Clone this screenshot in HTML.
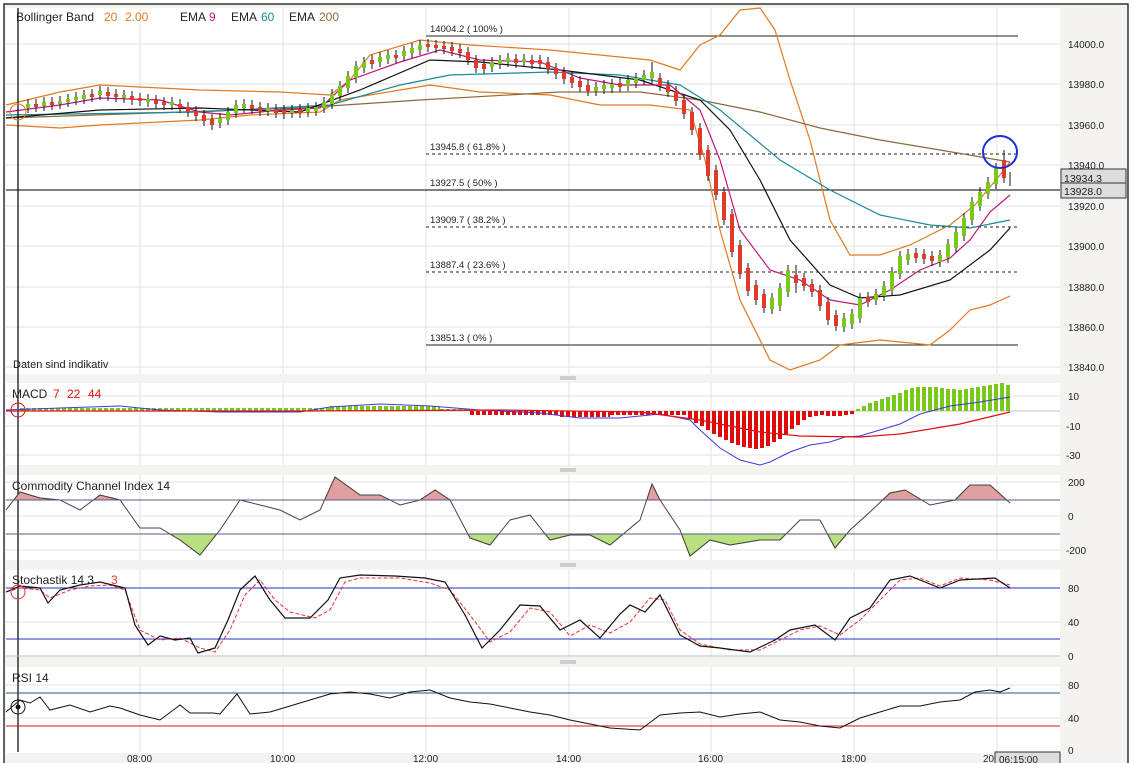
<!DOCTYPE html>
<html><head><meta charset="utf-8"><style>
html,body{margin:0;padding:0;background:#fff;width:1134px;height:763px;overflow:hidden}
svg{display:block;font-family:"Liberation Sans",sans-serif}
</style></head><body>
<svg width="1134" height="763" xmlns="http://www.w3.org/2000/svg">
<defs>
<clipPath id="ca"><rect x="0" y="470" width="1060" height="30"/></clipPath>
<clipPath id="cb"><rect x="0" y="534" width="1060" height="30"/></clipPath>
</defs>
<rect x="0" y="0" width="1134" height="763" fill="#fff"/>
<rect x="4" y="4" width="1124" height="770" fill="#f4f3ef" stroke="#333" stroke-width="1.5"/>
<rect x="6" y="8" width="1054" height="366" fill="#fff"/>
<rect x="6" y="383" width="1054" height="82" fill="#fff"/>
<rect x="6" y="475" width="1054" height="85" fill="#fff"/>
<rect x="6" y="570" width="1054" height="87" fill="#fff"/>
<rect x="6" y="667" width="1054" height="86" fill="#fff"/>
<g stroke="#aaa" stroke-width="1">
<path d="M560 377h16M560 379h16M560 469h16M560 471h16M560 564h16M560 566h16M560 661h16M560 663h16"/>
</g>
<g stroke="#e2e2e2" stroke-width="1">
<path d="M140 8V374M283 8V374M426 8V374M569 8V374M711 8V374M854 8V374M997 8V374"/>
<path d="M140 383V465M283 383V465M426 383V465M569 383V465M711 383V465M854 383V465M997 383V465"/>
<path d="M140 475V560M283 475V560M426 475V560M569 475V560M711 475V560M854 475V560M997 475V560"/>
<path d="M140 570V657M283 570V657M426 570V657M569 570V657M711 570V657M854 570V657M997 570V657"/>
<path d="M140 667V752M283 667V752M426 667V752M569 667V752M711 667V752M854 667V752M997 667V752"/>
<path d="M6 44H1060M6 84H1060M6 125H1060M6 165H1060M6 206H1060M6 246H1060M6 287H1060M6 327H1060M6 367H1060"/>
<path d="M6 396H1060M6 426H1060M6 455H1060"/>
<path d="M6 482H1060M6 516H1060M6 550H1060"/>
<path d="M6 622H1060"/>
<path d="M6 685H1060M6 718H1060"/>
</g>
<g stroke="#222" stroke-width="1" fill="none">
<path d="M426 36H1018M426 345H1018"/>
<path d="M426 154H1018M426 227H1018M426 272H1018" stroke-dasharray="3,3"/>
<path d="M6 190H1060" stroke="#000"/>
</g>
<g font-size="9.5" fill="#222">
<text x="430" y="32">14004.2 ( 100% )</text>
<text x="430" y="150">13945.8 ( 61.8% )</text>
<text x="430" y="186">13927.5 ( 50% )</text>
<text x="430" y="223">13909.7 ( 38.2% )</text>
<text x="430" y="268">13887.4 ( 23.6% )</text>
<text x="430" y="341">13851.3 ( 0% )</text>
</g>
<g fill="none" stroke-width="1.2">
<polyline stroke="#e07a20" points="6,105 60,92 100,85 160,88 200,90 280,92 330,95 350,80 370,55 420,40 470,45 550,50 600,55 650,60 680,70 700,45 720,35 740,10 760,8 775,30 790,80 810,140 830,220 850,255 880,255 910,245 950,225 975,205 1000,175 1010,162"/>
<polyline stroke="#e07a20" points="6,125 60,128 100,125 200,120 250,115 320,112 340,100 400,90 430,85 480,92 550,95 600,105 650,105 690,110 705,160 720,230 740,300 770,360 790,370 820,360 840,345 880,340 930,345 950,330 970,310 990,305 1010,296"/>
<polyline stroke="#8a6a3a" points="6,118 300,108 420,100 560,92 640,92 700,100 760,112 820,128 880,140 940,150 1010,162"/>
<polyline stroke="#1a8a99" points="6,115 200,112 330,105 400,85 450,75 550,72 620,75 680,85 720,110 780,160 830,190 880,215 930,225 970,228 1010,220"/>
<polyline stroke="#111" points="6,118 100,110 200,108 300,112 360,90 430,60 480,62 560,70 640,80 700,100 730,130 760,180 790,240 830,285 860,298 900,295 950,280 990,250 1010,228"/>
<polyline stroke="#c0187a" points="6,112 60,105 100,98 160,100 200,112 230,115 280,110 320,108 350,80 400,62 440,50 480,60 540,62 580,78 620,85 670,85 700,110 720,160 740,230 770,270 800,280 830,300 860,305 890,290 920,270 950,258 970,240 990,212 1010,195"/>
</g>
<!-- candles wicks -->
<path stroke="#111" stroke-width="1" fill="none" d="M28 99V113M36 99V112M44 97V111M52 97V110M60 96V109M68 94V107M76 92V105M84 90V104M92 89V102M100 86V100M108 87V101M116 89V102M124 90V103M132 91V105M140 93V106M148 94V107M156 95V109M164 97V110M172 97V110M180 99V113M188 102V117M196 106V121M204 110V126M212 114V130M220 113V128M228 107V125M236 100V118M244 99V113M252 100V114M260 102V116M268 103V116M276 104V118M284 105V119M292 105V118M300 104V118M308 103V117M316 102V116M324 97V113M332 89V109M340 81V101M348 71V93M356 61V83M364 57V73M372 55V69M380 52V67M388 50V64M396 50V63M404 46V61M412 43V58M420 40V55M428 39V52M436 40V53M444 41V54M452 42V56M460 44V58M468 47V65M476 55V73M484 59V74M492 57V72M500 55V69M508 53V67M516 54V68M524 54V67M532 55V69M540 55V69M548 57V74M556 63V79M564 67V84M572 72V88M580 76V92M588 80V96M596 82V96M604 80V94M612 79V93M620 78V92M628 75V91M636 73V88M644 70V85M652 62V83M660 73V91M668 80V97M676 86V106M684 95V119M692 107V135M700 123V160M708 145V181M716 165V200M724 187V225M732 209V257M740 240V279M748 263V296M756 280V305M764 289V313M772 293V314M780 283V311M788 265V297M796 265V293M804 273V291M812 279V297M820 285V311M828 297V325M836 310V331M844 313V332M852 309V329M860 293V323M868 292V307M876 289V305M884 281V301M892 267V295M900 251V279M908 249V265M916 248V263M924 249V264M932 251V266M940 250V267M948 239V263M956 227V253M964 213V241M972 197V225M980 187V211M988 177V199M996 163V189M1004 150V183M1010 172V186"/>
<path stroke="#7ac81a" stroke-width="4" fill="none" d="M28 104V108M44 102V106M60 101V104M68 99V102M76 97V100M84 95V99M100 91V95M124 95V98M148 99V102M172 102V105M220 118V123M228 112V120M236 105V113M244 104V108M268 108V111M292 110V113M308 108V112M316 107V111M324 102V108M332 94V104M340 86V96M348 76V88M356 66V78M364 62V68M380 57V62M388 55V59M404 51V56M412 48V53M420 45V50M492 62V67M500 60V64M508 58V62M524 59V62M596 87V91M604 85V89M612 84V88M628 80V86M636 78V83M644 75V80M652 72V78M772 298V309M780 288V306M788 270V292M844 318V327M852 314V324M860 298V318M876 294V300M884 286V296M892 272V290M900 256V274M908 254V260M940 255V262M948 244V258M956 232V248M964 218V236M972 202V220M980 192V206M988 182V194M996 168V184"/>
<path stroke="#e03a2a" stroke-width="4" fill="none" d="M36 104V107M52 102V105M92 94V97M108 92V96M116 94V97M132 96V100M140 98V101M156 100V104M164 102V105M180 104V108M188 107V112M196 111V116M204 115V121M212 119V125M252 105V109M260 107V111M276 109V113M284 110V114M300 109V113M372 60V64M396 55V58M428 44V47M436 45V48M444 46V49M452 47V51M460 49V53M468 52V60M476 60V68M484 64V69M516 59V63M532 60V64M540 60V64M548 62V69M556 68V74M564 72V79M572 77V83M580 81V87M588 85V91M620 83V87M660 78V86M668 85V92M676 91V101M684 100V114M692 112V130M700 128V155M708 150V176M716 170V195M724 192V220M732 214V252M740 245V274M748 268V291M756 285V300M764 294V308M796 275V283M804 278V286M812 284V292M820 290V306M828 302V320M836 315V326M868 297V302M916 253V258M924 254V259M932 256V261M1004 160V178"/>
<line x1="18" y1="8" x2="18" y2="752" stroke="#000" stroke-width="1.2"/>
<circle cx="18" cy="112" r="8" fill="none" stroke="#e07a20"/>
<ellipse cx="1000" cy="152" rx="17" ry="16" fill="none" stroke="#1a2fd6" stroke-width="2"/>
<g font-size="10" fill="#222">
<text x="1068" y="48">14000.0</text><text x="1068" y="88">13980.0</text><text x="1068" y="129">13960.0</text>
<text x="1068" y="169">13940.0</text><text x="1068" y="210">13920.0</text><text x="1068" y="250">13900.0</text>
<text x="1068" y="291">13880.0</text><text x="1068" y="331">13860.0</text><text x="1068" y="371">13840.0</text>
</g>
<rect x="1061" y="169" width="65" height="14" fill="#ddd" stroke="#333"/>
<rect x="1061" y="183" width="65" height="15" fill="#ddd" stroke="#333"/>
<text x="1064" y="182" font-size="10.5" fill="#222">13934.3</text>
<text x="1064" y="195" font-size="10.5" fill="#222">13928.0</text>
<!-- MACD -->
<line x1="6" y1="411" x2="1060" y2="411" stroke="#b8c4cc"/>
<path d="M20 409.5H330" stroke="#7ac81a" stroke-width="3" stroke-dasharray="4,2"/>
<path d="M330 408.5H440" stroke="#7ac81a" stroke-width="5" stroke-dasharray="4,2"/>
<path d="M440 410H466" stroke="#7ac81a" stroke-width="2" stroke-dasharray="4,2"/>
<path d="M470 413H560" stroke="#e00a0a" stroke-width="4" stroke-dasharray="4,2"/>
<path d="M560 414H610" stroke="#e00a0a" stroke-width="6" stroke-dasharray="4,2"/>
<path d="M610 413H686" stroke="#e00a0a" stroke-width="4" stroke-dasharray="4,2"/>
<path stroke="#e00a0a" stroke-width="4" fill="none" d="M690 411v8M696 411v12M702 411v15M708 411v19M714 411v23M720 411v26M726 411v29M732 411v32M738 411v34M744 411v36M750 411v37M756 411v38M762 411v37M768 411v35M774 411v31M780 411v28M786 411v23M792 411v18M798 411v14M804 411v9M810 411v6M816 411v5M822 411v4M828 411v5M834 411v5M840 411v5M846 411v4M852 411v3"/>
<path stroke="#7ac81a" stroke-width="4" fill="none" d="M858 411v-2M864 411v-5M870 411v-8M876 411v-10M882 411v-12M888 411v-14M894 411v-16M900 411v-18M906 411v-21M912 411v-23M918 411v-24M924 411v-24M930 411v-24M936 411v-24M942 411v-23M948 411v-22M954 411v-22M960 411v-21M966 411v-22M972 411v-23M978 411v-24M984 411v-25M990 411v-26M996 411v-27M1002 411v-28M1008 411v-26"/>
<polyline fill="none" stroke="#3a3ae0" stroke-width="1" points="6,410 60,408 120,406 160,410 220,412 300,412 330,407 380,404 430,406 480,410 540,413 580,418 620,418 660,414 690,420 700,430 720,448 740,460 760,465 770,462 790,452 810,445 830,442 845,437 860,436 880,430 900,424 920,414 950,406 980,402 1010,397"/>
<polyline fill="none" stroke="#e01010" stroke-width="1.2" points="6,411 300,411 500,410 640,412 700,420 760,432 800,436 860,437 900,434 960,424 1010,412"/>
<!-- CCI -->
<path clip-path="url(#ca)" fill="#e0a0a0" stroke="#c06060" d="M6,510 L20,492 L40,498 L60,500 L80,510 L100,495 L120,500 L140,528 L160,528 L180,540 L200,555 L220,530 L240,500 L260,505 L280,510 L300,520 L320,510 L335,477 L360,495 L380,495 L400,505 L420,500 L435,490 L450,500 L470,538 L490,545 L510,520 L530,515 L550,540 L570,535 L590,535 L610,545 L640,520 L652,484 L660,500 L680,530 L690,556 L710,540 L730,545 L760,540 L780,540 L800,520 L820,520 L835,548 L850,530 L870,512 L890,493 L905,490 L930,505 L955,500 L970,485 L990,485 L1010,503 L1010,500 L6,500 Z"/>
<path clip-path="url(#cb)" fill="#b8e080" stroke="#70b020" d="M6,510 L20,492 L40,498 L60,500 L80,510 L100,495 L120,500 L140,528 L160,528 L180,540 L200,555 L220,530 L240,500 L260,505 L280,510 L300,520 L320,510 L335,477 L360,495 L380,495 L400,505 L420,500 L435,490 L450,500 L470,538 L490,545 L510,520 L530,515 L550,540 L570,535 L590,535 L610,545 L640,520 L652,484 L660,500 L680,530 L690,556 L710,540 L730,545 L760,540 L780,540 L800,520 L820,520 L835,548 L850,530 L870,512 L890,493 L905,490 L930,505 L955,500 L970,485 L990,485 L1010,503 L1010,534 L6,534 Z"/>
<path fill="none" stroke="#444" d="M6,510 L20,492 L40,498 L60,500 L80,510 L100,495 L120,500 L140,528 L160,528 L180,540 L200,555 L220,530 L240,500 L260,505 L280,510 L300,520 L320,510 L335,477 L360,495 L380,495 L400,505 L420,500 L435,490 L450,500 L470,538 L490,545 L510,520 L530,515 L550,540 L570,535 L590,535 L610,545 L640,520 L652,484 L660,500 L680,530 L690,556 L710,540 L730,545 L760,540 L780,540 L800,520 L820,520 L835,548 L850,530 L870,512 L890,493 L905,490 L930,505 L955,500 L970,485 L990,485 L1010,503"/>
<path d="M6 500H1060M6 534H1060" stroke="#5a5a8a"/>
<!-- Stoch -->
<path d="M6 588H1060M6 639H1060" stroke="#2430c8"/>
<line x1="6" y1="656" x2="1060" y2="656" stroke="#b0c0d0"/>
<polyline fill="none" stroke="#ee3030" stroke-dasharray="4,2" points="6,592 20,588 40,590 50,598 70,590 90,586 110,585 125,590 140,630 160,640 180,638 200,648 215,652 230,630 245,595 260,580 275,600 290,612 315,618 330,610 345,582 360,578 400,578 430,583 450,590 470,615 490,642 510,632 530,608 550,612 570,636 590,625 610,633 630,622 650,598 665,600 680,630 700,644 730,650 760,650 780,640 800,630 820,626 840,635 860,620 880,600 900,580 920,578 940,586 960,578 990,580 1010,585"/>
<polyline fill="none" stroke="#111" stroke-width="1.2" points="6,592 20,586 40,588 48,603 60,590 80,585 100,582 125,588 135,625 148,645 160,636 175,640 190,638 198,653 215,648 228,620 240,590 255,576 270,600 285,618 310,618 328,600 340,578 360,575 395,576 425,578 445,582 465,615 482,648 500,630 520,605 540,606 560,630 580,620 600,638 620,614 630,605 645,612 660,595 680,635 700,646 720,648 750,652 775,640 790,630 815,625 835,640 850,618 870,608 890,580 910,576 940,588 960,580 995,578 1010,588"/>
<!-- RSI -->
<line x1="6" y1="693" x2="1060" y2="693" stroke="#1c5a80"/>
<line x1="6" y1="726" x2="1060" y2="726" stroke="#e81010"/>
<polyline fill="none" stroke="#111" points="6,712 20,700 30,703 40,697 50,710 70,705 90,712 110,706 120,708 140,715 160,720 180,705 190,713 213,713 220,714 237,694 250,714 270,712 290,706 310,700 330,694 350,692 370,694 390,698 410,692 430,690 450,698 470,702 490,704 510,708 530,712 550,715 570,720 590,724 610,728 640,730 660,715 680,713 700,712 720,717 740,714 760,712 780,720 800,722 820,726 840,728 860,718 880,712 900,706 920,706 940,702 960,700 975,692 990,690 1000,692 1010,688"/>
<circle cx="18" cy="707" r="7" fill="none" stroke="#111"/><circle cx="18" cy="707" r="2.5" fill="#111"/>
<circle cx="18" cy="592" r="7" fill="none" stroke="#ee3030"/>
<circle cx="18" cy="410" r="7" fill="none" stroke="#e01010"/>
<g font-size="10" fill="#222">
<text x="1068" y="400">10</text><text x="1066" y="430">-10</text><text x="1066" y="459">-30</text>
<text x="1068" y="486">200</text><text x="1068" y="520">0</text><text x="1066" y="554">-200</text>
<text x="1068" y="592">80</text><text x="1068" y="626">40</text><text x="1068" y="660">0</text>
<text x="1068" y="689">80</text><text x="1068" y="722">40</text><text x="1068" y="754">0</text>
<text x="127" y="762">08:00</text><text x="270" y="762">10:00</text><text x="413" y="762">12:00</text>
<text x="556" y="762">14:00</text><text x="698" y="762">16:00</text><text x="841" y="762">18:00</text>
<text x="983" y="762">20</text>
</g>
<rect x="995" y="752" width="65" height="14" fill="#ddd" stroke="#333"/>
<text x="999" y="763" font-size="10" fill="#222">06:15:00</text>
<g font-size="12" fill="#222">
<text x="16" y="21">Bollinger Band</text><text x="104" y="21" fill="#e07a20">20</text><text x="125" y="21" fill="#e07a20">2.00</text>
<text x="180" y="21">EMA</text><text x="209" y="21" fill="#c0187a">9</text>
<text x="231" y="21">EMA</text><text x="261" y="21" fill="#1a8a99">60</text>
<text x="289" y="21">EMA</text><text x="319" y="21" fill="#8a6a3a">200</text>
<text x="12" y="398">MACD</text><text x="53" y="398" fill="#e01010">7</text><text x="67" y="398" fill="#e01010">22</text><text x="88" y="398" fill="#e01010">44</text>
<text x="12" y="490">Commodity Channel Index  14</text>
<text x="12" y="584">Stochastik  14  3</text><text x="111" y="584" fill="#ee3030">3</text>
<text x="12" y="682">RSI  14</text>
<text x="13" y="368" font-size="11">Daten sind indikativ</text>
</g>
</svg>
</body></html>
